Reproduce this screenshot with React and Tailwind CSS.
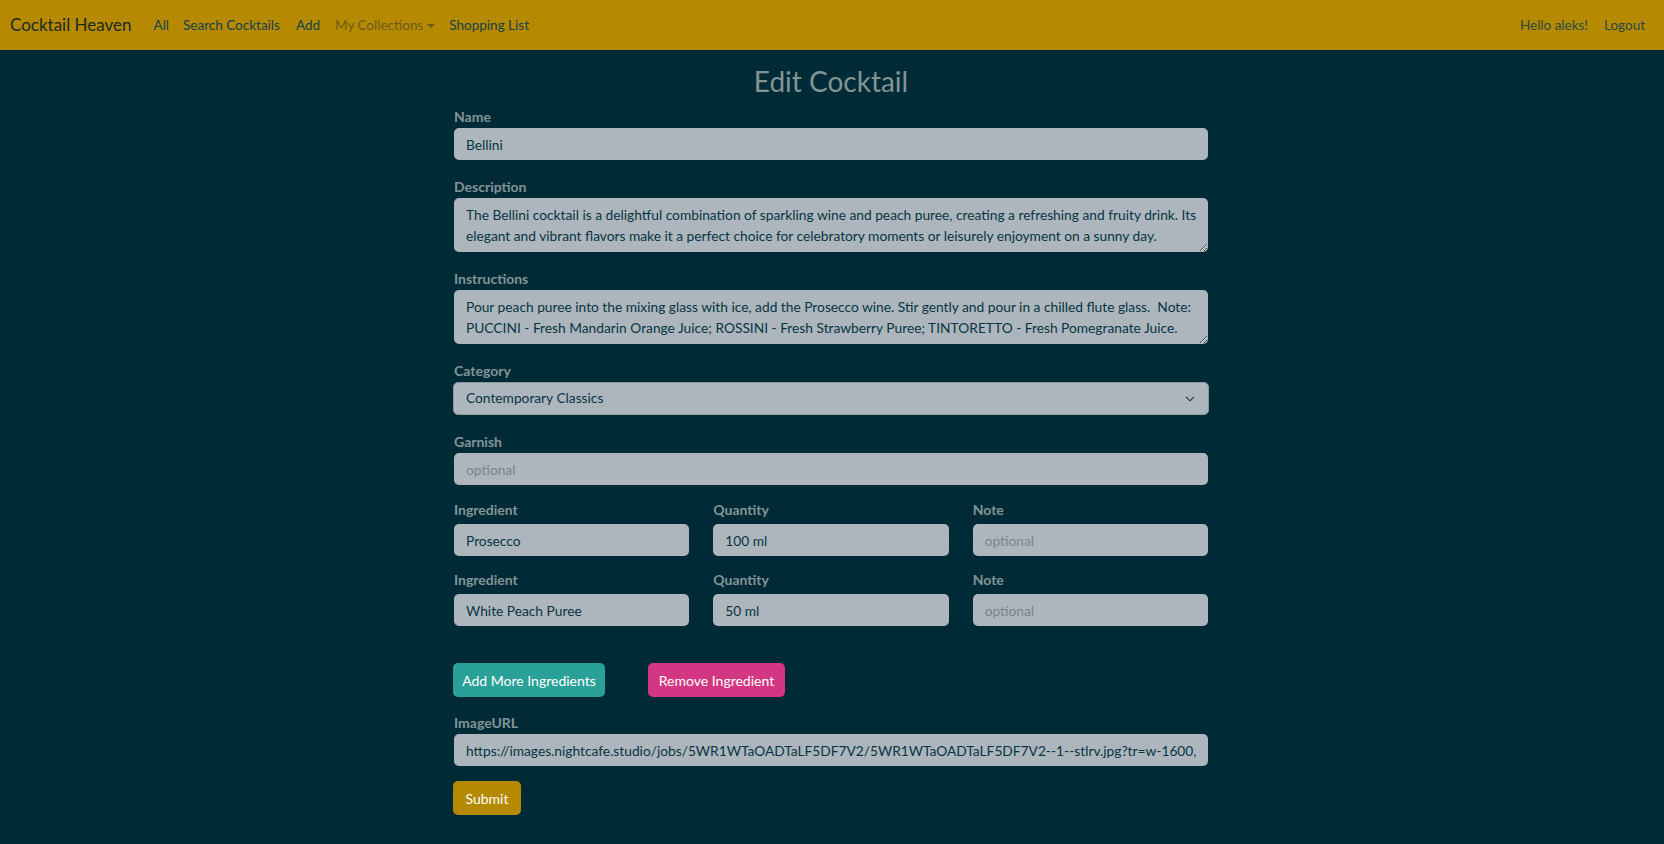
import { useState } from "react";

const font = { fontFamily: "Lato, 'Liberation Sans', sans-serif" };

const inputCls =
  "block h-[32px] w-full rounded-[5px] bg-[#adb5bd] px-3 text-[13.75px] text-[#073642] placeholder:text-[#77868c] outline-none";

function Label({ children, className = "" }) {
  return (
    <label
      className={`block h-[22px] text-[14px] font-bold leading-[22px] text-[#839496] ${className}`}
    >
      {children}
    </label>
  );
}

function Field({ label, value, placeholder, labelClass }) {
  return (
    <div>
      <Label className={labelClass}>{label}</Label>
      <input
        type="text"
        defaultValue={value}
        placeholder={placeholder}
        className={inputCls}
      />
    </div>
  );
}

function Area({ label, value }) {
  return (
    <div>
      <Label>{label}</Label>
      <textarea
        wrap="off"
        defaultValue={value}
        className="block h-[54px] w-full overflow-hidden rounded-[5px] bg-[#adb5bd] px-3 py-[6px] text-[13.75px] leading-[21px] text-[#073642] outline-none"
      />
    </div>
  );
}

function IngredientRow({ name, quantity, className }) {
  return (
    <div className={`grid grid-cols-3 gap-x-6 ${className}`}>
      <Field label="Ingredient" value={name} labelClass="mb-[3px]" />
      <Field label="Quantity" value={quantity} labelClass="mb-[3px]" />
      <Field label="Note" placeholder="optional" labelClass="mb-[3px]" />
    </div>
  );
}

function Navbar() {
  return (
    <nav className="flex h-[50px] items-center bg-[#b58900] pl-[10px] pr-[19px]">
      <a className="mr-[22px] text-[17px] text-[#1c2a22]">Cocktail Heaven</a>
      <div className="flex items-center gap-[14px] text-[13.5px] text-[#15414a]">
        <a>All</a>
        <a>Search Cocktails</a>
        <a className="ml-[2px]">Add</a>
        <a className="ml-[1px] flex items-center gap-[4px] text-[#6d5b16]">
          My Collections
          <span className="mt-[1px] h-0 w-0 border-x-[4px] border-t-[4px] border-x-transparent border-t-[#6d5b16]" />
        </a>
        <a>Shopping List</a>
      </div>
      <div className="ml-auto flex items-center gap-4 text-[13.5px] text-[#2b4a40]">
        <span>Hello aleks!</span>
        <a>Logout</a>
      </div>
    </nav>
  );
}

export default function App() {
  const [category, setCategory] = useState("Contemporary Classics");

  return (
    <div style={font} className="min-h-screen bg-[#002b36]">
      <Navbar />
      <main className="mx-auto w-[754px] translate-x-[-1px]">
        <h2 className="mt-[14px] mb-[8px] text-center text-[28px] leading-[34px] text-[#839496]">
          Edit Cocktail
        </h2>

        <form className="flex flex-col gap-4" onSubmit={(e) => e.preventDefault()}>
          <Field label="Name" value="Bellini" />
          <Area
            label="Description"
            value={
              "The Bellini cocktail is a delightful combination of sparkling wine and peach puree, creating a refreshing and fruity drink. Its\nelegant and vibrant flavors make it a perfect choice for celebratory moments or leisurely enjoyment on a sunny day."
            }
          />
          <Area
            label="Instructions"
            value={
              "Pour peach puree into the mixing glass with ice, add the Prosecco wine. Stir gently and pour in a chilled flute glass.  Note:\nPUCCINI - Fresh Mandarin Orange Juice; ROSSINI - Fresh Strawberry Puree; TINTORETTO - Fresh Pomegranate Juice."
            }
          />

          <div>
            <Label>Category</Label>
            <div className="relative">
              <select
                value={category}
                onChange={(e) => setCategory(e.target.value)}
                className="block h-[33px] w-[756px] -ml-px appearance-none rounded-[5px] border border-[#8e989f] bg-[#adb5bd] px-3 text-[13.75px] text-[#073642] outline-none"
              >
                <option>Contemporary Classics</option>
                <option>Unforgettables</option>
                <option>New Era Drinks</option>
              </select>
              <svg
                className="pointer-events-none absolute right-[13px] top-[12px] h-[10px] w-[10px]"
                viewBox="0 0 16 16"
                fill="none"
                stroke="#343a40"
                strokeWidth="2"
                strokeLinecap="round"
                strokeLinejoin="round"
              >
                <path d="M2 5l6 6 6-6" />
              </svg>
            </div>
          </div>

          <Field label="Garnish" placeholder="optional" />

          <IngredientRow name="Prosecco" quantity="100 ml" className="-mt-[2px]" />
          <IngredientRow name="White Peach Puree" quantity="50 ml" className="-mt-[3px]" />

          <div className="mt-[21px] flex items-center">
            <button
              type="button"
              className="-ml-px h-[34px] w-[152px] rounded-[5px] bg-[#2aa198] text-[14px] text-white"
            >
              Add More Ingredients
            </button>
            <button
              type="button"
              className="ml-[43px] h-[34px] w-[137px] rounded-[5px] bg-[#d33682] text-[14px] text-white"
            >
              Remove Ingredient
            </button>
          </div>

          <div className="-mt-px">
            <Label>ImageURL</Label>
            <input
              type="text"
              defaultValue="https://images.nightcafe.studio/jobs/5WR1WTaOADTaLF5DF7V2/5WR1WTaOADTaLF5DF7V2--1--stlrv.jpg?tr=w-1600,c-at_max"
              className={inputCls}
            />
          </div>

          <div className="-mt-px">
            <button
              type="submit"
              className="-ml-px h-[34px] w-[68px] rounded-[5px] bg-[#b58900] text-[14px] text-white"
            >
              Submit
            </button>
          </div>
        </form>
      </main>
    </div>
  );
}
